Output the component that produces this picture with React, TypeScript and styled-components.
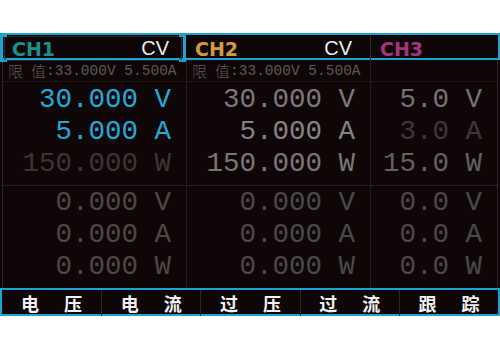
import React from "react";
import styled, { createGlobalStyle } from "styled-components";

const Global = createGlobalStyle`
  html, body { margin: 0; padding: 0; background: #ffffff; }
  #root { width: 500px; height: 350px; overflow: hidden; }
`;

const CYAN = "#1ba3d3";
const BG = "#0f0707";

const Screen = styled.div`
  margin-top: 33px;
  width: 500px;
  height: 283px;
  background: ${BG};
  display: flex;
  flex-direction: column;
`;

const Header = styled.div`
  height: 23px;
  border: 2px solid ${CYAN};
  border-left: none;
  display: grid;
  grid-template-columns: 186px 184px 1fr;
`;

const HeadCell = styled.div<{ $active?: boolean; $sep?: boolean }>`
  position: relative;
  display: flex;
  align-items: center;
  justify-content: space-between;
  padding: 0 18px 0 9px;
  border-left: ${(p) => (p.$sep ? "1px solid #2e2a2a" : "none")};
  ${(p) =>
    p.$active &&
    `
    border-left: 3px solid ${CYAN};
    border-right: 3px solid ${CYAN};
    padding: 1px 1px;
  `}
`;

const Hook = styled.span<{ $side: "l" | "r"; $v: "t" | "b" }>`
  position: absolute;
  width: 4px;
  height: 2px;
  background: ${CYAN};
  ${(p) => (p.$side === "l" ? "left: 0;" : "right: 0;")}
  ${(p) => (p.$v === "t" ? "top: 0;" : "bottom: 0;")}
`;

const Tab = styled.div`
  flex: 1;
  height: 100%;
  box-sizing: border-box;
  border: 1px solid #2c2a2a;
  border-radius: 3px;
  display: flex;
  align-items: center;
  justify-content: space-between;
  padding: 0 12px 0 7px;
`;

const ChName = styled.span<{ $color: string }>`
  font-family: "DejaVu Sans", "Liberation Sans", sans-serif;
  font-weight: bold;
  font-size: 19px;
  color: ${(p) => p.$color};
`;

const Mode = styled.span`
  font-family: "Liberation Sans", Arial, sans-serif;
  font-size: 20px;
  color: #ececec;
`;

const Body = styled.div`
  flex: 1;
  display: grid;
  grid-template-columns: 184px 184px 1fr;
  margin: 0 2px;
  border-left: 1px solid #2a2626;
  border-right: 1px solid #2a2626;
`;

const Column = styled.div<{ $last?: boolean }>`
  display: flex;
  flex-direction: column;
  border-right: ${(p) => (p.$last ? "none" : "1px dotted #363030")};
`;

const LimitRow = styled.div`
  height: 21px;
  display: flex;
  align-items: center;
  padding-left: 5px;
  border-bottom: 1px dotted #2a2424;
  color: #5c5858;
  white-space: pre;
`;

const LimitCJK = styled.span<{ $gap?: boolean }>`
  font-family: "Noto Sans CJK SC", sans-serif;
  font-weight: 300;
  font-size: 15px;
  margin-left: ${(p) => (p.$gap ? "8px" : "0")};
`;

const LimitNum = styled.span`
  font-family: "Liberation Mono", "DejaVu Sans Mono", monospace;
  font-size: 14.5px;
`;

const Block = styled.div<{ $top?: boolean }>`
  display: flex;
  flex-direction: column;
  padding: ${(p) => (p.$top ? "2px 0 5px" : "1px 0 5px")};
  border-bottom: ${(p) => (p.$top ? "1px dotted #363030" : "none")};
`;

const Reading = styled.div<{ $color: string }>`
  height: 32px;
  line-height: 32px;
  text-align: right;
  padding-right: 15px;
  font-family: "Liberation Mono", "DejaVu Sans Mono", monospace;
  font-size: 27.5px;
  color: ${(p) => p.$color};
  white-space: pre;
`;

const Footer = styled.div`
  height: 24px;
  border: 2px solid ${CYAN};
  display: grid;
  grid-template-columns: repeat(5, 1fr);
`;

const FootCell = styled.div<{ $first?: boolean }>`
  display: flex;
  align-items: center;
  justify-content: center;
  gap: 25px;
  border-left: ${(p) => (p.$first ? "none" : "1px solid #2a2626")};
  font-family: "Noto Sans CJK SC", sans-serif;
  font-weight: 700;
  font-size: 18px;
  color: #f2f2f2;
`;

type Ch = {
  name: string;
  color: string;
  mode?: string;
  limit?: string;
  upper: [string, string][];
  lower: [string, string][];
};

const chans: Ch[] = [
  {
    name: "CH1",
    color: "#16918c",
    mode: "CV",
    limit: ":33.000V 5.500A",
    upper: [
      ["30.000 V", "#22a9dc"],
      ["5.000 A", "#22a9dc"],
      ["150.000 W", "#3a3636"],
    ],
    lower: [
      ["0.000 V", "#4c4848"],
      ["0.000 A", "#4c4848"],
      ["0.000 W", "#4c4848"],
    ],
  },
  {
    name: "CH2",
    color: "#d49a3c",
    mode: "CV",
    limit: ":33.000V 5.500A",
    upper: [
      ["30.000 V", "#7c7878"],
      ["5.000 A", "#868282"],
      ["150.000 W", "#7a7676"],
    ],
    lower: [
      ["0.000 V", "#4c4848"],
      ["0.000 A", "#4c4848"],
      ["0.000 W", "#4c4848"],
    ],
  },
  {
    name: "CH3",
    color: "#a4347f",
    upper: [
      ["5.0 V", "#767272"],
      ["3.0 A", "#3c3838"],
      ["15.0 W", "#646060"],
    ],
    lower: [
      ["0.0 V", "#4c4848"],
      ["0.0 A", "#4c4848"],
      ["0.0 W", "#4c4848"],
    ],
  },
];

const keys: [string, string][] = [
  ["电", "压"],
  ["电", "流"],
  ["过", "压"],
  ["过", "流"],
  ["跟", "踪"],
];

export default function App() {
  return (
    <>
      <Global />
      <Screen>
        <Header>
          <HeadCell $active>
            <Hook $side="l" $v="t" />
            <Hook $side="l" $v="b" />
            <Hook $side="r" $v="t" />
            <Hook $side="r" $v="b" />
            <Tab>
              <ChName $color={chans[0].color}>{chans[0].name}</ChName>
              <Mode>{chans[0].mode}</Mode>
            </Tab>
          </HeadCell>
          <HeadCell>
            <ChName $color={chans[1].color}>{chans[1].name}</ChName>
            <Mode>{chans[1].mode}</Mode>
          </HeadCell>
          <HeadCell $sep>
            <ChName $color={chans[2].color}>{chans[2].name}</ChName>
          </HeadCell>
        </Header>
        <Body>
          {chans.map((c, i) => (
            <Column key={c.name} $last={i === chans.length - 1}>
              <LimitRow>
                {c.limit && (
                  <>
                    <LimitCJK>限</LimitCJK>
                    <LimitCJK $gap>值</LimitCJK>
                    <LimitNum>{c.limit}</LimitNum>
                  </>
                )}
              </LimitRow>
              <Block $top>
                {c.upper.map(([t, col]) => (
                  <Reading key={t} $color={col}>
                    {t}
                  </Reading>
                ))}
              </Block>
              <Block>
                {c.lower.map(([t, col]) => (
                  <Reading key={t} $color={col}>
                    {t}
                  </Reading>
                ))}
              </Block>
            </Column>
          ))}
        </Body>
        <Footer>
          {keys.map(([a, b], i) => (
            <FootCell key={i} $first={i === 0}>
              <span>{a}</span>
              <span>{b}</span>
            </FootCell>
          ))}
        </Footer>
      </Screen>
    </>
  );
}
